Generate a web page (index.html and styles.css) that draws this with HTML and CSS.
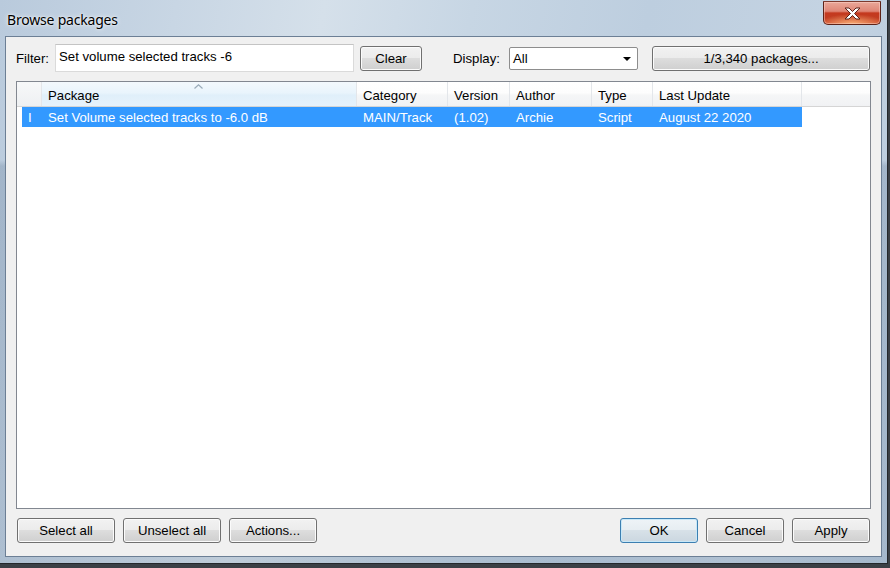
FILE: index.html
```html
<!DOCTYPE html>
<html>
<head>
<meta charset="utf-8">
<title>Browse packages</title>
<link rel="stylesheet" href="styles.css">
</head>
<body>
<div class="window">
  <div class="titlebar">
    <span class="title">Browse packages</span>
    <div class="close">
      <svg width="17" height="13" viewBox="0 0 17 13"><polygon points="1,1 5,1 8.5,4.5 12,1 16,1 10.5,6.5 16,12 12,12 8.5,8.5 5,12 1,12 6.5,6.5" fill="#fff" stroke="#5a2219" stroke-width="1" stroke-linejoin="round"/></svg>
    </div>
  </div>
  <div class="client">
    <div class="toolbar">
      <span class="lbl lbl-filter">Filter:</span>
      <div class="input">Set volume selected tracks -6</div>
      <button class="btn clear">Clear</button>
      <span class="lbl lbl-display">Display:</span>
      <div class="select"><span class="select-val">All</span><svg class="select-arrow" width="8" height="4" viewBox="0 0 8 4"><polygon points="0,0 8,0 4,4" fill="#000"/></svg></div>
      <button class="btn packages">1/3,340 packages...</button>
    </div>
    <div class="list">
      <div class="header">
        <div class="hcell c0"></div>
        <div class="hcell c1 sorted">Package<svg class="sort" width="9" height="5" viewBox="0 0 9 5"><polyline points="0.5,4.5 4.5,0.8 8.5,4.5" fill="none" stroke="#9aabb9" stroke-width="1.2"/></svg></div>
        <div class="hcell c2">Category</div>
        <div class="hcell c3">Version</div>
        <div class="hcell c4">Author</div>
        <div class="hcell c5">Type</div>
        <div class="hcell c6">Last Update</div>
        <div class="hcell filler"></div>
      </div>
      <div class="row selected">
        <div class="cell r0">I</div>
        <div class="cell c1">Set Volume selected tracks to -6.0 dB</div>
        <div class="cell c2">MAIN/Track</div>
        <div class="cell c3">(1.02)</div>
        <div class="cell c4">Archie</div>
        <div class="cell c5">Script</div>
        <div class="cell c6">August 22 2020</div>
      </div>
    </div>
    <div class="footer">
      <div class="group">
        <button class="btn wide">Select all</button>
        <button class="btn wide">Unselect all</button>
        <button class="btn actions">Actions...</button>
      </div>
      <div class="group">
        <button class="btn dlg default">OK</button>
        <button class="btn dlg">Cancel</button>
        <button class="btn dlg">Apply</button>
      </div>
    </div>
  </div>
</div>
</body>
</html>
```
FILE: styles.css
```css
* { box-sizing: border-box; }
html, body { margin: 0; padding: 0; }
body {
  width: 890px;
  height: 568px;
  overflow: hidden;
  background: #3b4046;
  font-family: "Liberation Sans", Arial, sans-serif;
  font-size: 13.2px;
  color: #000;
}
.window {
  width: 888px;
  height: 564px;
  padding: 0 5px 6px 5px;
  border-right: 1px solid #24282c;
  border-bottom: 1px solid #24282c;
  display: flex;
  flex-direction: column;
  background:
    linear-gradient(to bottom, rgba(30,60,95,0) 0, rgba(30,60,95,0) 160px, rgba(30,60,95,0.16) 166px, rgba(30,60,95,0.12) 100%),
    linear-gradient(100deg, #b9cadc 0%, #c8d6e4 18%, #d5e0ea 33%, #c7d6e4 48%, #bdcedf 66%, #c4d3e2 84%, #b8cadc 100%);
}
.titlebar {
  height: 36px;
  flex: none;
  display: flex;
  justify-content: space-between;
  align-items: flex-start;
}
.title {
  font-family: "Noto Sans", sans-serif;
  font-size: 14px;
  letter-spacing: -0.2px;
  line-height: 19px;
  margin: 10px 0 0 2px;
  text-shadow: 0 0 5px rgba(255,255,255,0.9), 0 0 2px rgba(255,255,255,0.8);
}
.close {
  width: 58px;
  height: 24px;
  margin: 1px 1px 0 0;
  border: 1px solid #5e2318;
  border-top-color: #7c3a2e;
  border-radius: 1px 1px 5px 5px;
  background:
    radial-gradient(ellipse 60% 45% at 50% 100%, rgba(255,190,130,0.85) 0, rgba(255,150,100,0) 100%),
    linear-gradient(#eaa899 0%, #df8676 42%, #c4391f 50%, #c23d22 75%, #d2502f 100%);
  box-shadow: inset 0 0 0 1px rgba(255,220,210,0.45);
  display: flex;
  align-items: center;
  justify-content: center;
}
.client {
  flex: 1;
  background: #f0f0f0;
  border: 1px solid #6c7f95;
  display: flex;
  flex-direction: column;
}
.toolbar {
  height: 28px;
  margin: 7px 11px 0 10px;
  display: flex;
  align-items: center;
  flex: none;
}
.lbl { line-height: 16px; padding-top: 2px; }
.lbl-filter { width: 39px; }
.input {
  width: 299px;
  height: 28px;
  background: #fff;
  border: 1px solid #dadada;
  border-top-color: #c4c4c4;
  padding: 4px 3px 0 3px;
  line-height: 15px;
  white-space: nowrap;
}
.btn {
  font-family: "Liberation Sans", Arial, sans-serif;
  font-size: 13.2px;
  color: #000;
  height: 25px;
  padding: 1px 0 0 0;
  border: 1px solid #707070;
  border-radius: 3px;
  background: linear-gradient(#f2f2f2 0%, #ebebeb 50%, #dddddd 50%, #cfcfcf 100%);
  box-shadow: inset 0 0 0 1px #fbfbfb;
  text-align: center;
  line-height: 22px;
  flex: none;
}
.clear { width: 62px; margin-left: 6px; }
.lbl-display { margin-left: 31px; width: 56px; }
.select {
  width: 129px;
  height: 23px;
  background: #fff;
  border: 1px solid #8d8d8d;
  border-radius: 2px;
  display: flex;
  align-items: center;
  justify-content: space-between;
  padding: 1px 6px 0 3px;
}
.select-val { line-height: 16px; }
.packages { width: 218px; margin-left: 14px; }
.list {
  flex: none;
  height: 428px;
  margin: 9px 10px 0 10px;
  border: 1px solid #828790;
  background: #fff;
}
.header {
  display: flex;
  height: 25px;
  border-bottom: 1px solid #d5d5d5;
  background: linear-gradient(#ffffff 0%, #fdfdfd 45%, #f5f6f7 55%, #f1f2f4 100%);
}
.hcell {
  height: 24px;
  padding: 3px 0 0 6px;
  line-height: 21px;
  border-right: 1px solid #e3e6ea;
  white-space: nowrap;
  position: relative;
}
.hcell.c0 { width: 25px; background: linear-gradient(#f7f8f9, #eef0f2); }
.hcell.sorted { background: linear-gradient(#f3f9fd 0%, #e9f4fc 45%, #e0effa 55%, #e6f2fb 100%); }
.hcell.filler { flex: 1; border-right: none; }
.sort { position: absolute; top: 2px; left: 152px; }
.c1 { width: 315px; }
.c2 { width: 91px; }
.c3 { width: 62px; }
.c4 { width: 82px; }
.c5 { width: 61px; }
.c6 { width: 149px; }
.row {
  display: flex;
  height: 20px;
  margin-left: 5px;
  width: 780px;
}
.row.selected { background: #3399ff; color: #fff; }
.cell {
  padding-left: 6px;
  line-height: 21px;
  white-space: nowrap;
}
.row .c1, .row .c2, .row .c3, .row .c4, .row .c5 { border-right: 1px solid transparent; }
.cell.r0 { width: 20px; }
.footer {
  flex: none;
  height: 25px;
  margin: 9px 11px 13px 11px;
  display: flex;
  justify-content: space-between;
}
.group { display: flex; gap: 8px; }
.wide { width: 98px; }
.actions { width: 88px; }
.dlg { width: 78px; }
.btn.default {
  border-color: #3c7fb1;
  box-shadow: inset 0 0 0 1px #c8e8f8;
  background: linear-gradient(#eef3f7 0%, #e6edf2 50%, #d7e1e8 50%, #cbd7e0 100%);
}
```
